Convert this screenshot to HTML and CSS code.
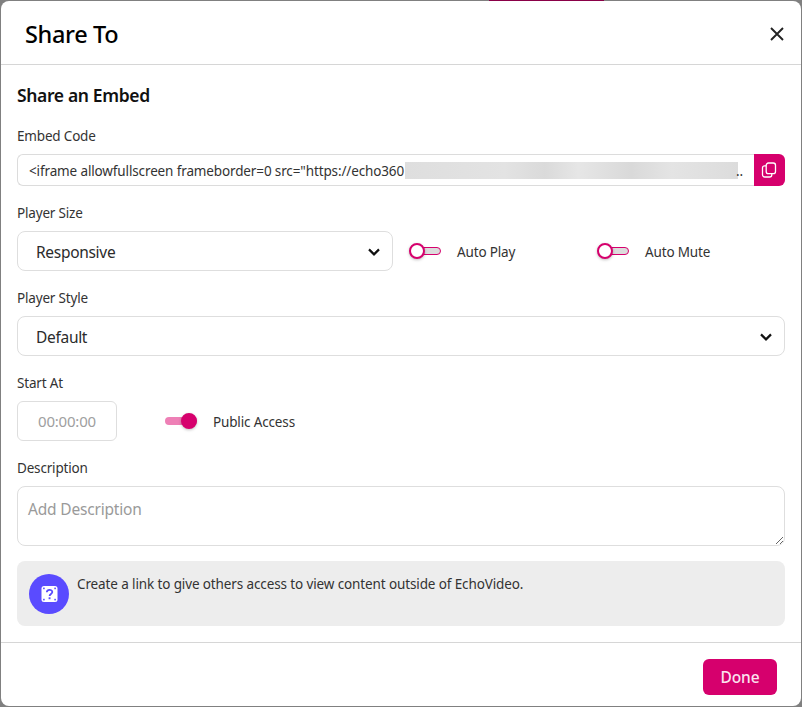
FILE: index.html
```html
<!DOCTYPE html>
<html lang="en">
<head>
<meta charset="utf-8">
<title>Share To</title>
<link rel="stylesheet" href="styles.css">
</head>
<body>
<div class="backdrop-strip"></div>
<div class="dialog">
  <header class="dialog-header">
    <h1 class="dialog-title">Share To</h1>
    <button class="close" type="button" aria-label="Close">
      <svg viewBox="0 0 14 14" width="14" height="14"><path d="M1 1l12 12M13 1L1 13" fill="none" stroke="#222" stroke-width="1.9"/></svg>
    </button>
  </header>
  <main class="dialog-body">
    <h2 class="section-title">Share an Embed</h2>

    <label class="field-label first">Embed Code</label>
    <div class="code-row">
      <div class="code-box">
        <span class="code-text">&lt;iframe allowfullscreen frameborder=0 src="https://echo360</span>
        <span class="code-blur"></span>
        <span class="code-dots">..</span>
      </div>
      <button class="copy" type="button" aria-label="Copy">
        <svg viewBox="0 0 16 16" width="16" height="16" fill="none" stroke="#fff" stroke-width="1.3" stroke-linejoin="round"><rect x="5.2" y="1" width="9.3" height="10.6" rx="2.2"/><path d="M5.2 3.8H3.5A2 2 0 0 0 1.5 5.8V12.8A2.2 2.2 0 0 0 3.7 15H8.6A2.2 2.2 0 0 0 10.8 12.8V11.6"/></svg>
      </button>
    </div>

    <label class="field-label">Player Size</label>
    <div class="size-row">
      <div class="select-box narrow">
        <span>Responsive</span>
        <svg class="chev" viewBox="0 0 12 8" width="12" height="8"><path d="M1 1.4l5 5 5-5" fill="none" stroke="#111" stroke-width="2.2"/></svg>
      </div>
      <div class="toggle-item wide">
        <span class="toggle off"><i class="track"></i><i class="knob"></i></span>
        <span class="toggle-text">Auto Play</span>
      </div>
      <div class="toggle-item">
        <span class="toggle off"><i class="track"></i><i class="knob"></i></span>
        <span class="toggle-text">Auto Mute</span>
      </div>
    </div>

    <label class="field-label">Player Style</label>
    <div class="select-box">
      <span>Default</span>
      <svg class="chev" viewBox="0 0 12 8" width="12" height="8"><path d="M1 1.4l5 5 5-5" fill="none" stroke="#111" stroke-width="2.2"/></svg>
    </div>

    <label class="field-label">Start At</label>
    <div class="start-row">
      <div class="time-box">00:00:00</div>
      <div class="toggle-item">
        <span class="toggle on"><i class="track"></i><i class="knob"></i></span>
        <span class="toggle-text">Public Access</span>
      </div>
    </div>

    <label class="field-label">Description</label>
    <textarea class="description" placeholder="Add Description"></textarea>

    <div class="info">
      <span class="info-icon">
        <svg viewBox="0 0 16 16" width="17" height="16"><rect width="16" height="16" rx="2.5" fill="#fff"/><g fill="#5a4bff"><rect x="1.6" y="1.6" width="1.6" height="1.6"/><rect x="12.8" y="1.6" width="1.6" height="1.6"/><rect x="1.6" y="12.8" width="1.6" height="1.6"/><rect x="12.8" y="12.8" width="1.6" height="1.6"/><rect x="7.1" y="11.3" width="1.9" height="1.9"/></g><path d="M5.3 6.3C5.3 3 10.8 3 10.8 6.1C10.8 8 8.1 8 8.1 10" fill="none" stroke="#5a4bff" stroke-width="1.8"/></svg>
      </span>
      <p class="info-text">Create a link to give others access to view content outside of EchoVideo.</p>
    </div>
  </main>
  <footer class="dialog-footer">
    <button class="done" type="button">Done</button>
  </footer>
</div>
</body>
</html>
```

FILE: styles.css
```css
* { box-sizing: border-box; }
html, body { height: 100%; }
body {
  margin: 0;
  padding: 1px;
  background: #808080;
  font-family: "Noto Sans", "Open Sans", sans-serif;
  color: #2b2b2b;
  overflow: hidden;
  position: relative;
}
.backdrop-strip {
  position: absolute;
  top: 0;
  left: 489px;
  width: 115px;
  height: 1px;
  background: #8a0047;
}
.dialog {
  width: 800px;
  height: 705px;
  background: #fff;
  border-radius: 8px;
  position: relative;
  overflow: hidden;
}
.dialog-header {
  height: 64px;
  border-bottom: 1px solid #d6d6d6;
  display: flex;
  align-items: center;
  justify-content: space-between;
  padding: 3px 17px 0 24px;
}
.dialog-title {
  margin: 0;
  font-size: 23.5px;
  font-weight: 500;
  letter-spacing: -0.35px;
  color: #000;
  line-height: 30px;
}
.close {
  border: 0;
  background: none;
  padding: 0;
  width: 14px;
  height: 14px;
  display: block;
}
.close svg { display: block; }
.dialog-body { padding: 18px 16px 0; }
.section-title {
  margin: 0;
  font-size: 17.5px;
  font-weight: 600;
  line-height: 24px;
  color: #111;
  letter-spacing: -0.35px;
}
.field-label {
  display: block;
  margin: 17px 0 8px;
  font-size: 13.5px;
  line-height: 20px;
  color: #333;
  letter-spacing: -0.18px;
}
.field-label.first { margin-top: 19px; }
.code-row { display: flex; height: 32px; }
.code-box {
  width: 737px;
  border: 1px solid #dcdcdc;
  border-right: 0;
  border-radius: 6px 0 0 6px;
  display: flex;
  align-items: center;
  padding: 1px 0 0 11px;
  font-size: 13.5px;
  letter-spacing: -0.13px;
  color: #333;
  white-space: nowrap;
  overflow: hidden;
}
.code-text { width: 376px; flex: none; overflow: hidden; }
.code-blur {
  width: 333px;
  height: 17px;
  flex: none;
  background: linear-gradient(90deg, #dedede, #e3e3e3 30%, #dadada 42%, #e6e6e6 52%, #d9d9d9 68%, #e4e4e4 80%, #dcdcdc);
}
.code-dots { margin-left: -2px; }
.copy {
  width: 31px;
  height: 32px;
  border: 0;
  padding: 0 1px 0 0;
  background: #d6006d;
  border-radius: 0 6px 6px 0;
  display: flex;
  align-items: center;
  justify-content: center;
}
.size-row { display: flex; align-items: center; }
.select-box {
  height: 40px;
  border: 1px solid #dedede;
  border-radius: 8px;
  display: flex;
  align-items: center;
  justify-content: space-between;
  padding: 1px 12px 0 18px;
  font-size: 15.5px;
  color: #2b2b2b;
  letter-spacing: -0.3px;
}
.select-box.narrow { width: 376px; margin-right: 16px; flex: none; }
.toggle-item {
  display: flex;
  align-items: center;
  gap: 16px;
  font-size: 13.5px;
  letter-spacing: -0.15px;
  color: #333;
}
.toggle-text { padding-top: 2px; }
.toggle-item.wide { width: 188px; flex: none; }
.toggle {
  position: relative;
  display: block;
  width: 32px;
  height: 16px;
  flex: none;
}
.track {
  position: absolute;
  left: 4px;
  right: 0;
  top: 4px;
  height: 8px;
  border-radius: 4px;
  background: #dcdcdc;
  border: 1px solid #d6006d;
}
.knob {
  position: absolute;
  top: 0;
  left: 0;
  width: 16px;
  height: 16px;
  border-radius: 50%;
  background: #fff;
  border: 2px solid #d6006d;
  box-shadow: 0 1px 3px rgba(0,0,0,.25);
}
.toggle.on .track { background: #ee80b6; border: 0; left: 0; right: 0; }
.toggle.on .knob { left: auto; right: 0; background: #d6006d; }
.start-row { display: flex; align-items: center; gap: 48px; }
.time-box {
  width: 100px;
  height: 40px;
  border: 1px solid #dedede;
  border-radius: 6px;
  display: flex;
  align-items: center;
  justify-content: center;
  font-size: 15px;
  letter-spacing: -0.2px;
  color: #a0a0a0;
}
.description {
  display: block;
  width: 768px;
  height: 60px;
  border: 1px solid #dedede;
  border-radius: 8px;
  padding: 12px 10px;
  font-family: inherit;
  font-size: 15.5px;
  letter-spacing: -0.18px;
  line-height: 21px;
  resize: vertical;
  outline: none;
}
.description::placeholder { color: #9a9a9a; opacity: 1; }
.info {
  margin-top: 15px;
  height: 65px;
  background: #ededed;
  border-radius: 8px;
  display: flex;
  padding: 13px 12px;
  gap: 8px;
}
.info-icon {
  width: 40px;
  height: 40px;
  border-radius: 50%;
  background: #5a4bff;
  display: flex;
  align-items: center;
  justify-content: center;
  flex: none;
}
.info-text {
  margin: 0;
  font-size: 13.5px;
  line-height: 20px;
  letter-spacing: -0.12px;
  color: #333;
}
.dialog-footer {
  margin-top: 16px;
  border-top: 1px solid #d6d6d6;
  padding: 16px 24px 0 0;
  display: flex;
  justify-content: flex-end;
}
.done {
  width: 74px;
  height: 36px;
  border: 0;
  border-radius: 6px;
  background: #d6006d;
  color: #fbe3ef;
  font-family: inherit;
  font-size: 15.5px;
  font-weight: 500;
  letter-spacing: -0.1px;
  padding: 0;
}
```
